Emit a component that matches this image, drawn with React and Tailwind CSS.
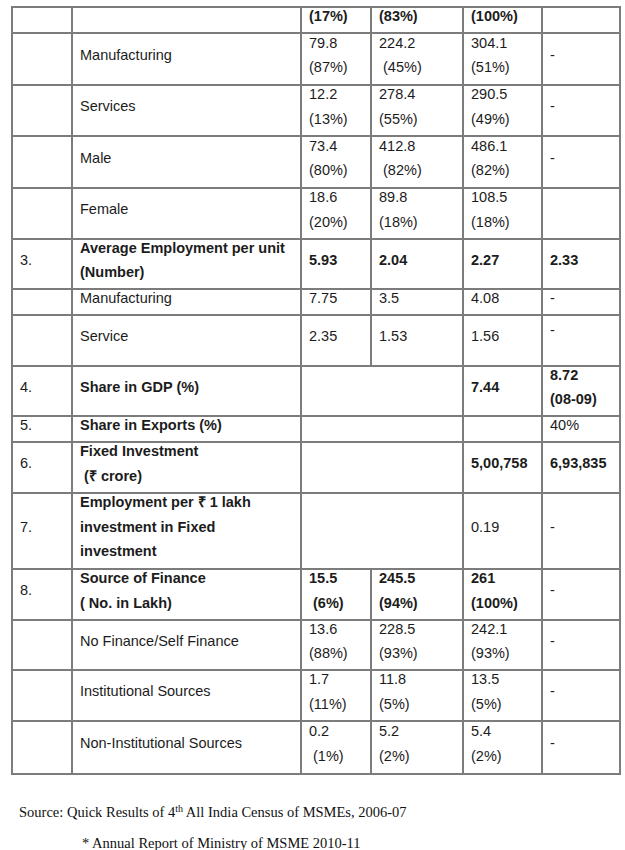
const rows = [
  { h: 26, no: '', label: [''], cells: [{ t: ['(17%)'], b: true }, { t: ['(83%)'], b: true }, { t: ['(100%)'], b: true }, { t: [''] }] },
  { h: 52, no: '', label: ['Manufacturing'], cells: [{ t: ['79.8', '(87%)'] }, { t: ['224.2', ' (45%)'] }, { t: ['304.1', '(51%)'] }, { t: ['-'] }] },
  { h: 51, no: '', label: ['Services'], cells: [{ t: ['12.2', '(13%)'] }, { t: ['278.4', '(55%)'] }, { t: ['290.5', '(49%)'] }, { t: ['-'] }] },
  { h: 52, no: '', label: ['Male'], cells: [{ t: ['73.4', '(80%)'] }, { t: ['412.8', ' (82%)'] }, { t: ['486.1', '(82%)'] }, { t: ['-'] }] },
  { h: 51, no: '', label: ['Female'], cells: [{ t: ['18.6', '(20%)'] }, { t: ['89.8', '(18%)'] }, { t: ['108.5', '(18%)'] }, { t: [''] }] },
  { h: 50, no: '3.', label: ['Average Employment per unit', '(Number)'], lb: true, cells: [{ t: ['5.93'], b: true }, { t: ['2.04'], b: true }, { t: ['2.27'], b: true }, { t: ['2.33'], b: true }] },
  { h: 26, no: '', label: ['Manufacturing'], cells: [{ t: ['7.75'] }, { t: ['3.5'] }, { t: ['4.08'] }, { t: ['-'] }] },
  { h: 51, no: '', label: ['Service'], cells: [{ t: ['2.35'] }, { t: ['1.53'] }, { t: ['1.56'] }, { t: ['-'], top: true }] },
  { h: 50, no: '4.', label: ['Share in GDP (%)'], lb: true, cells: [{ t: [''], span: 2 }, { t: ['7.44'], b: true }, { t: ['8.72', '(08-09)'], b: true }] },
  { h: 26, no: '5.', label: ['Share in Exports (%)'], lb: true, cells: [{ t: [''], span: 2 }, { t: [''] }, { t: ['40%'] }] },
  { h: 51, no: '6.', label: ['Fixed Investment', ' (₹ crore)'], lb: true, cells: [{ t: [''], span: 2 }, { t: ['5,00,758'], b: true }, { t: ['6,93,835'], b: true }] },
  { h: 76, no: '7.', label: ['Employment per ₹ 1 lakh', 'investment in Fixed', 'investment'], lb: true, cells: [{ t: [''], span: 2 }, { t: ['0.19'] }, { t: ['-'] }] },
  { h: 51, no: '8.', label: ['Source of Finance', '( No. in Lakh)'], lb: true, cells: [{ t: ['15.5', ' (6%)'], b: true }, { t: ['245.5', '(94%)'], b: true }, { t: ['261', '(100%)'], b: true }, { t: ['-'] }] },
  { h: 50, no: '', label: ['No Finance/Self Finance'], cells: [{ t: ['13.6', '(88%)'] }, { t: ['228.5', '(93%)'] }, { t: ['242.1', '(93%)'] }, { t: ['-'] }] },
  { h: 51, no: '', label: ['Institutional Sources'], cells: [{ t: ['1.7', '(11%)'] }, { t: ['11.8', '(5%)'] }, { t: ['13.5', '(5%)'] }, { t: ['-'] }] },
  { h: 53, no: '', label: ['Non-Institutional Sources'], cells: [{ t: ['0.2', ' (1%)'] }, { t: ['5.2', '(2%)'] }, { t: ['5.4', '(2%)'] }, { t: ['-'] }] },
]

const Lines = ({ lines }) => (
  <div className="-mt-2">
    {lines.map((l, i) => (
      <div key={i} className="whitespace-pre">{l || '\u00a0'}</div>
    ))}
  </div>
)

const App = () => {
  return (
    <div className="w-[625px] h-[850px] bg-white overflow-hidden pt-[6px] text-[#1c1c1c]" style={{ fontFamily: '"Liberation Sans", Arial, sans-serif' }}>
      {/* table */}
      <table className="ml-[11px] w-[608px] table-fixed border-collapse text-[14.5px] leading-[24.5px]">
        <colgroup>
          <col className="w-[60px]" />
          <col className="w-[229px]" />
          <col className="w-[70px]" />
          <col className="w-[92px]" />
          <col className="w-[79px]" />
          <col className="w-[78px]" />
        </colgroup>
        <tbody>
          {rows.map((r, i) => (
            <tr key={i} style={{ height: r.h }}>
              <td className="border-2 border-[#7c7c7c] pl-[7px] pr-1 py-0 align-middle">
                <Lines lines={[r.no]} />
              </td>
              <td className={`border-2 border-[#7c7c7c] pl-[7px] pr-1 py-0 align-middle ${r.lb ? 'font-bold' : ''}`}>
                <Lines lines={r.label} />
              </td>
              {r.cells.map((c, j) => (
                <td
                  key={j}
                  colSpan={c.span || 1}
                  className={`border-2 border-[#7c7c7c] pl-[7px] pr-1 py-0 ${c.top ? 'align-top pt-[2px]' : 'align-middle'} ${c.b ? 'font-bold' : ''}`}
                >
                  {c.top ? (
                    <div>{c.t[0]}</div>
                  ) : (
                    <Lines lines={c.t} />
                  )}
                </td>
              ))}
            </tr>
          ))}
        </tbody>
      </table>

      {/* footnote */}
      <div className="mt-[22px] text-[14.5px] leading-[31px] text-[#111]" style={{ fontFamily: '"Liberation Serif", "Times New Roman", serif' }}>
        <p className="pl-[19px]">
          Source: Quick Results of 4<sup className="text-[10px]">th</sup> All India Census of MSMEs, 2006-07
        </p>
        <p className="pl-[82px]">* Annual Report of Ministry of MSME 2010-11</p>
      </div>
    </div>
  )
}

export default App
